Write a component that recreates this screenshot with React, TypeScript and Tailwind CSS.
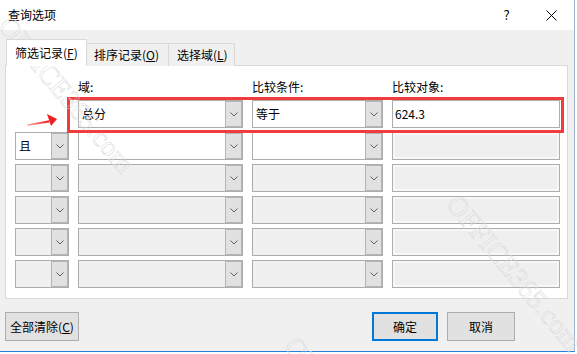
const FONT = '[font-family:"Microsoft_YaHei","Noto_Sans_CJK_SC",sans-serif]';

function Arrow() {
  return (
    <div className="w-[17px] h-full bg-[#e1e1e1] border border-[#b4b4b4] flex items-center justify-center">
      <svg width="8" height="5" viewBox="0 0 8 5">
        <path d="M0.5 0.5 L4 4 L7.5 0.5" fill="none" stroke="#606060" strokeWidth="1" />
      </svg>
    </div>
  );
}

function Combo({ text, enabled }: { text?: string; enabled?: boolean }) {
  return (
    <div
      className={`h-[28px] flex items-stretch border border-[#adadad] ${
        enabled ? 'bg-white' : 'bg-[#f0f0f0]'
      }`}
    >
      <div className="flex-1 flex items-center pl-[3px] text-[12px] text-black">{text}</div>
      <Arrow />
    </div>
  );
}

function TextBox({ text, enabled }: { text?: string; enabled?: boolean }) {
  return (
    <div
      className={`h-[28px] flex items-center pl-[2px] border border-[#adadad] text-[12px] text-black ${
        enabled ? 'bg-white' : 'bg-[#efefef] shadow-[inset_0_0_0_2px_#f7f7f7]'
      }`}
    >
      {text}
    </div>
  );
}

const rows = [
  { logic: null, field: '总分', cond: '等于', value: '624.3', enabled: true },
  { logic: '且', field: '', cond: '', value: '', enabled: true },
  { logic: '', field: '', cond: '', value: '', enabled: false },
  { logic: '', field: '', cond: '', value: '', enabled: false },
  { logic: '', field: '', cond: '', value: '', enabled: false },
  { logic: '', field: '', cond: '', value: '', enabled: false },
];

// faint outlined watermark laid over the screenshot
function Watermark({ className }: { className: string }) {
  return (
    <div
      className={`absolute pointer-events-none whitespace-nowrap [font-family:"Liberation_Serif",serif] text-[28px] text-transparent [-webkit-text-stroke:0.5px_#dadada] origin-left ${className}`}
    >
      OFFICE365.com
    </div>
  );
}

export default function App() {
  return (
    <div className={`relative w-[577px] h-[354px] bg-white overflow-hidden ${FONT}`}>
      <div className="w-[575px] h-[352px] flex flex-col bg-[#f0f0f0] border-r border-r-[#9db3cc] border-b border-b-[#2b7fd4]">
        {/* Title bar */}
        <div className="h-[30px] bg-white flex items-center pl-[8px] text-[12px] text-black">
          <span className="flex-1">查询选项</span>
          <span className="w-[45px] text-center text-[13px]">?</span>
          <span className="w-[45px] flex justify-center">
            <svg width="11" height="11" viewBox="0 0 11 11">
              <path d="M0.5 0.5 L10.5 10.5 M10.5 0.5 L0.5 10.5" stroke="#000" strokeWidth="1" />
            </svg>
          </span>
        </div>

        {/* Tabs */}
        <div className="mt-[10px] ml-[6px] flex items-end h-[26px] relative z-10 -mb-px text-[12px] text-black">
          <div className="w-[81px] h-[27px] bg-white border border-b-0 border-[#d9d9d9] flex items-center pl-[8px]">
            筛选记录(<span className="underline">F</span>)
          </div>
          <div className="w-[82px] h-[23px] bg-[#f0f0f0] border border-l-0 border-b-0 border-[#d9d9d9] flex items-center pl-[7px]">
            排序记录(<span className="underline">O</span>)
          </div>
          <div className="w-[66px] h-[23px] bg-[#f0f0f0] border border-l-0 border-b-0 border-[#d9d9d9] flex items-center pl-[8px]">
            选择域(<span className="underline">L</span>)
          </div>
        </div>

        {/* Panel */}
        <div className="ml-[5px] w-[563px] h-[234px] bg-white border border-[#d9d9d9] pl-[9px] pt-[13px]">
          <div className="grid grid-cols-[54px_165px_131px_168px] gap-x-[9px] text-[12px] text-black leading-[16px]">
            <span />
            <span>域:</span>
            <span>比较条件:</span>
            <span>比较对象:</span>
          </div>
          <div className="mt-[5px] grid grid-cols-[54px_165px_131px_168px] gap-x-[9px] gap-y-[4px]">
            {rows.map((r, i) => (
              <div key={i} className="contents">
                {r.logic === null ? <div /> : <Combo text={r.logic} enabled={r.enabled} />}
                <Combo text={r.field} enabled={r.enabled} />
                <Combo text={r.cond} enabled={r.enabled} />
                <TextBox text={r.value} enabled={i === 0} />
              </div>
            ))}
          </div>
        </div>

        {/* Buttons */}
        <div className="mt-[13px] flex items-center text-[12px] text-black">
          <button className="ml-[5px] w-[74px] h-[29px] bg-[#e1e1e1] border border-[#adadad]">
            全部清除(<span className="underline">C</span>)
          </button>
          <button className="ml-[293px] w-[66px] h-[29px] bg-[#e1e1e1] border-2 border-[#0078d7]">确定</button>
          <button className="ml-[9px] w-[68px] h-[29px] bg-[#e1e1e1] border border-[#adadad]">取消</button>
        </div>
      </div>

      {/* Annotations */}
      <div className="absolute left-[67px] top-[97px] w-[497px] h-[36px] border-[3px] border-[#f23b3b] pointer-events-none" />
      <svg className="absolute left-[24px] top-[110px]" width="36" height="20" viewBox="0 0 36 20">
        <defs>
          <linearGradient id="ar" x1="0" x2="1" y1="0" y2="0">
            <stop offset="0" stopColor="#f7a0a0" />
            <stop offset="1" stopColor="#f02020" />
          </linearGradient>
        </defs>
        <path d="M3 14.5 L25 10.2 L25.6 12.6 L3.5 15.8 Z" fill="url(#ar)" />
        <path d="M23 4 L33 9 L27 16 Z" fill="#f02020" />
      </svg>

      <Watermark className="left-[4px] top-[0px] rotate-[50deg]" />
      <Watermark className="left-[452px] top-[178px] rotate-[50deg]" />
      <Watermark className="left-[290px] top-[320px] rotate-[50deg]" />
    </div>
  );
}
